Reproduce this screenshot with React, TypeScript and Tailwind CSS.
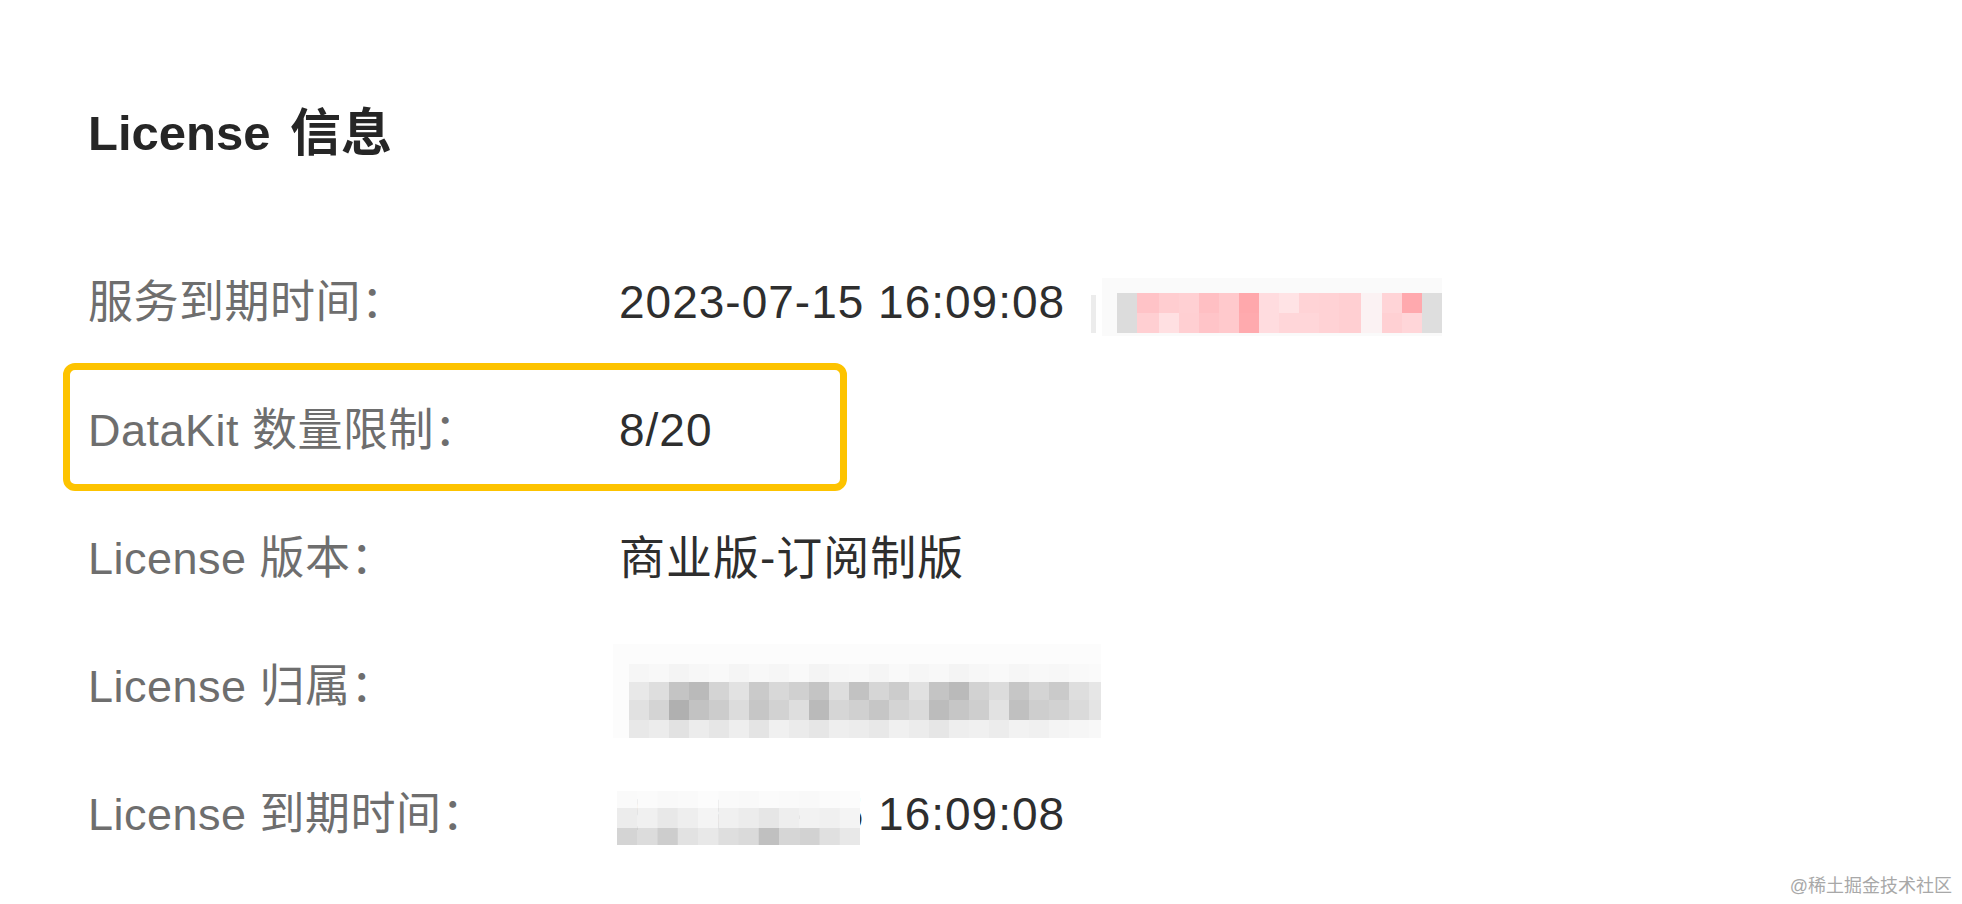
import React from "react";

type Cell = { x: number; y: number; w: number; h: number; c: string };

const g = (v: number) => `rgb(${v},${v},${v})`;

function Row1Mosaic() {
  const xs = [30, 50, 72, 92, 112, 132, 152, 172, 192, 212, 232, 252, 274, 295, 315, 335, 355];
  const top = ["#dcdcdc", "#ffc3c7", "#ffcdd0", "#ffd0d3", "#ffbfc3", "#ffc9cc", "#ffa8ac", "#ffdcdf", "#ffe3e5", "#ffd3d6", "#ffd2d5", "#ffcfd2", "#fbf2f3", "#ffd4d7", "#ffa9ae", "#dedede"];
  const bot = ["#dcdcdc", "#ffcfd2", "#ffe0e2", "#ffcfd2", "#ffc4c8", "#ffc9cc", "#ffaaae", "#ffdcdf", "#ffd6d9", "#ffd6d9", "#ffd2d5", "#ffcfd2", "#fbf2f3", "#ffd0d3", "#ffd6d9", "#dedede"];
  const cells: Cell[] = [];
  for (let i = 0; i < top.length; i++) {
    cells.push({ x: xs[i], y: 18, w: xs[i + 1] - xs[i], h: 20, c: top[i] });
    cells.push({ x: xs[i], y: 38, w: xs[i + 1] - xs[i], h: 20, c: bot[i] });
  }
  return (
    <svg width="360" height="64" viewBox="0 0 360 64" className="ml-[22px] mt-[10px] shrink-0">
      <rect x="15" y="3" width="340" height="58" fill="#fafafa" />
      <rect x="4" y="20" width="5" height="38" fill="#ececec" />
      {cells.map((c, i) => (
        <rect key={i} x={c.x} y={c.y} width={c.w} height={c.h} fill={c.c} />
      ))}
    </svg>
  );
}

function Row4Mosaic() {
  const topRow = [232, 222, 196, 186, 212, 226, 202, 216, 208, 196, 222, 194, 214, 204, 225, 196, 186, 210, 220, 198, 212, 202, 222, 230];
  const midRow = [225, 212, 176, 194, 204, 220, 198, 210, 222, 186, 214, 208, 198, 212, 218, 188, 198, 206, 226, 192, 206, 210, 218, 228];
  const botRow = [232, 236, 226, 236, 230, 238, 228, 240, 235, 230, 238, 236, 232, 240, 236, 230, 238, 240, 236, 242, 240, 244, 246, 248];
  const hazeRow = [246, 248, 244, 247, 249, 245, 248, 246, 249, 244, 247, 248, 245, 249, 246, 248, 244, 247, 249, 246, 248, 247, 249, 250];
  const cells: Cell[] = [];
  for (let i = 0; i < 24; i++) {
    const x = 16 + i * 20;
    const w = Math.min(20, 488 - x);
    cells.push({ x, y: 20, w, h: 18, c: g(hazeRow[i]) });
    cells.push({ x, y: 38, w, h: 18, c: g(topRow[i]) });
    cells.push({ x, y: 56, w, h: 20, c: g(midRow[i]) });
    cells.push({ x, y: 76, w, h: 18, c: g(botRow[i]) });
  }
  return (
    <svg width="488" height="94" viewBox="0 0 488 94" className="-ml-[6px] mt-[10px] shrink-0">
      <rect x="0" y="0" width="488" height="94" fill="#fcfcfc" />
      {cells.map((c, i) => (
        <rect key={i} x={c.x} y={c.y} width={c.w} height={c.h} fill={c.c} />
      ))}
    </svg>
  );
}

function Row5Overlay() {
  const light = [250, 251, 249, 250, 252, 250, 249, 251, 250, 249, 251, 252];
  const mid = [236, 240, 232, 238, 244, 240, 236, 230, 238, 242, 240, 244];
  const dark = [212, 220, 205, 226, 232, 222, 218, 192, 214, 210, 224, 232];
  const cells: Cell[] = [];
  for (let i = 0; i < 12; i++) {
    const x = i * 20.25;
    cells.push({ x, y: 0, w: 20.25, h: 17, c: g(light[i]) });
    cells.push({ x, y: 17, w: 20.25, h: 20, c: g(mid[i]) });
    cells.push({ x, y: 37, w: 20.25, h: 17, c: g(dark[i]) });
  }
  return (
    <svg width="243" height="54" viewBox="0 0 243 54" className="absolute -left-[2px] top-0">
      {cells.map((c, i) => (
        <rect key={i} x={c.x} y={c.y} width={c.w + 0.5} height={c.h} fill={c.c} />
      ))}
    </svg>
  );
}

function Row({
  label,
  children,
  highlight,
}: {
  label: string;
  children: React.ReactNode;
  highlight?: boolean;
}) {
  return (
    <div
      className={
        highlight
          ? "flex h-[128px] w-[784px] items-center rounded-[12px] border-[7px] border-[#fdc300] pl-[18px] pt-[6px]"
          : "flex h-[128px] w-[784px] items-center rounded-[12px] border-[7px] border-transparent pl-[18px] pt-[6px]"
      }
    >
      <div className="w-[531px] shrink-0 whitespace-nowrap text-[45px] leading-none tracking-[0.5px] text-[#6e6e6e]">
        {label}
      </div>
      <div className="flex shrink-0 items-center whitespace-nowrap text-[46px] leading-none tracking-[1px] text-[#2e2e2e]">
        {children}
      </div>
    </div>
  );
}

export default function App() {
  return (
    <div className="relative h-[904px] w-full overflow-hidden bg-white font-['Liberation_Sans','Noto_Sans_CJK_SC',sans-serif]">
      <div className="pl-[88px] pt-[103px]">
        <h1 className="flex h-[61px] items-center whitespace-pre text-[49px] font-bold leading-none text-[#262626]">
          License <span className="ml-[6px] text-[51px]">信息</span>
        </h1>
      </div>
      <div className="mt-[71px] flex flex-col pl-[63px]">
        <Row label="服务到期时间：">
          <span>2023-07-15 16:09:08</span>
          <Row1Mosaic />
        </Row>
        <Row label="DataKit 数量限制：" highlight>
          <span>8/20</span>
        </Row>
        <Row label="License 版本：">
          <span>商业版-订阅制版</span>
        </Row>
        <Row label="License 归属：">
          <Row4Mosaic />
        </Row>
        <Row label="License 到期时间：">
          <span className="relative block h-[46px]">
            2023-07-15 16:09:08
            <Row5Overlay />
          </span>
        </Row>
      </div>
      <div className="absolute bottom-[9px] right-[10px] text-[18px] leading-[18px] text-[#a8a8a8]">
        @稀土掘金技术社区
      </div>
    </div>
  );
}
